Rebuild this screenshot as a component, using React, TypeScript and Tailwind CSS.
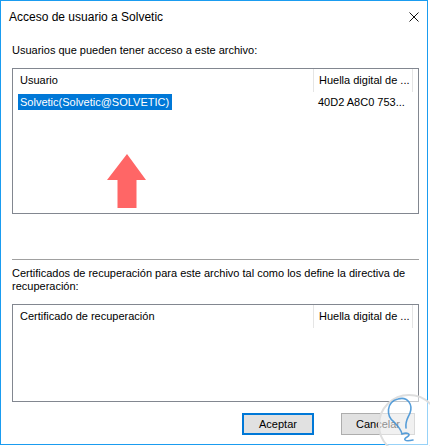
const font = "font-['Liberation_Sans',Arial,sans-serif]";

const ListHeader = ({ first }: { first: string }) => (
  <div className="flex h-[23px] items-stretch text-[11px] text-black">
    <div className="flex w-[300px] items-center pl-[7px]">{first}</div>
    <div className="w-px bg-[#e5e5e5]" />
    <div className="flex w-[98px] items-center pl-[5px] whitespace-nowrap">Huella digital de ...</div>
    <div className="w-px bg-[#e5e5e5]" />
  </div>
);

const Arrow = () => (
  <svg width="40" height="55" viewBox="0 0 40 55" className="absolute left-[94px] top-[85px]">
    <polygon points="20,0 39,26 29.5,26 29.5,54 10.5,54 10.5,26 0,26" fill="#ff6666" />
  </svg>
);

const Watermark = () => (
  <svg width="64" height="64" viewBox="0 0 64 64" className="absolute left-[377px] top-[392px]">
    <circle cx="32" cy="33" r="30" fill="white" fillOpacity="0.55" stroke="#dedede" strokeWidth="2" />
    <path
      d="M17 30 C9 24 9 10 21 7 C31 4 36 13 33 21 C31 26 28 29 29 36 M17 30 C21 34 24 37 25 42 C30 40 35 42 30 45 C26 47 27 50 36 48"
      fill="none"
      stroke="#3b8ed4"
      strokeOpacity="0.85"
      strokeWidth="1.6"
      strokeLinecap="round"
    />
  </svg>
);

export default function App() {
  return (
    <div className={`relative h-[446px] w-[430px] bg-white ${font}`}>
      <div className="flex h-[445px] w-[428px] flex-col border border-[#1a9cf0] bg-white">
        <div className="flex h-[31px] items-center justify-between pl-[8px] pr-[8px]">
          <span className="text-[12px] text-black">Acceso de usuario a Solvetic</span>
          <svg width="10" height="10" viewBox="0 0 10 10" className="mt-[1px]">
            <path d="M0.5 0.5 L9.5 9.5 M9.5 0.5 L0.5 9.5" stroke="#111" strokeWidth="1" />
          </svg>
        </div>

        <div className="flex flex-col px-[11px]">
          <p className="mt-[12px] text-[11px] leading-[13px] text-black">
            Usuarios que pueden tener acceso a este archivo:
          </p>

          <div className="relative mt-[11px] h-[146px] w-[407px] border border-[#828790] bg-white">
            <ListHeader first="Usuario" />
            <div className="mt-[2px] flex h-[16px] items-center text-[11px]">
              <div className="w-[300px] pl-[5px]">
                <span className="inline-block bg-[#0078d7] pl-[2px] pr-[3px] leading-[16px] text-white">
                  Solvetic(Solvetic@SOLVETIC)
                </span>
              </div>
              <div className="pl-[5px] text-black">40D2 A8C0 753...</div>
            </div>
            <Arrow />
          </div>

          <div className="mt-[45px] h-px w-[407px] bg-[#a0a0a0]" />

          <p className="mt-[7px] text-[11px] leading-[13px] text-black">
            Certificados de recuperación para este archivo tal como los define la directiva de
            recuperación:
          </p>

          <div className="mt-[11px] h-[98px] w-[407px] border border-[#828790] bg-white">
            <ListHeader first="Certificado de recuperación" />
          </div>

          <div className="mt-[11px] flex justify-end gap-[27px] pr-[1px]">
            <button className="h-[22px] w-[72px] border-2 border-[#0078d7] bg-[#e1e1e1] text-[11px] text-black">
              Aceptar
            </button>
            <button className="h-[22px] w-[74px] border border-[#adadad] bg-[#e1e1e1] text-[11px] text-black">
              Cancelar
            </button>
          </div>
        </div>
      </div>
      <Watermark />
    </div>
  );
}
